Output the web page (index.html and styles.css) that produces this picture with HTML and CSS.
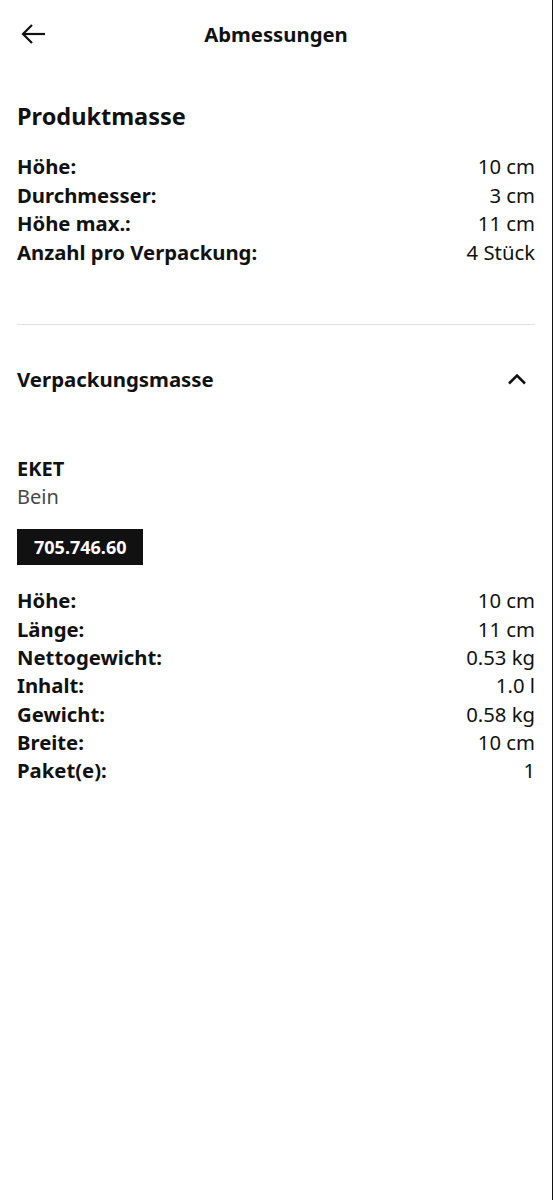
FILE: index.html
```html
<!DOCTYPE html>
<html lang="de">
<head>
    <meta charset="UTF-8">
    <meta name="viewport" content="width=device-width, initial-scale=1.0">
    <title>Abmessungen</title>
    <link rel="stylesheet" href="styles.css">
</head>
<body>
    <div class="page">
        <header class="topbar">
            <button class="back" aria-label="Zurück">
                <svg width="26" height="26" viewBox="0 0 26 26" fill="none" stroke="#111" stroke-width="2.2">
                    <path d="M25 13H3"/>
                    <path d="M12 4L3 13l9 9"/>
                </svg>
            </button>
            <h1 class="topbar-title">Abmessungen</h1>
            <span class="spacer"></span>
        </header>

        <section class="block">
            <h2 class="block-title">Produktmasse</h2>
            <dl class="specs">
                <div class="spec"><dt>Höhe:</dt><dd>10 cm</dd></div>
                <div class="spec"><dt>Durchmesser:</dt><dd>3 cm</dd></div>
                <div class="spec"><dt>Höhe max.:</dt><dd>11 cm</dd></div>
                <div class="spec"><dt>Anzahl pro Verpackung:</dt><dd>4 Stück</dd></div>
            </dl>
        </section>

        <hr class="divider">

        <section class="block">
            <div class="accordion-head">
                <h3 class="accordion-title">Verpackungsmasse</h3>
                <svg class="chevron" width="20" height="12" viewBox="0 0 20 12" fill="none" stroke="#111" stroke-width="2.6">
                    <path d="M2 10.5L10 2.5l8 8"/>
                </svg>
            </div>

            <div class="product">
                <div class="product-name">EKET</div>
                <div class="product-type">Bein</div>
                <span class="article">705.746.60</span>
            </div>

            <dl class="specs specs-package">
                <div class="spec"><dt>Höhe:</dt><dd>10 cm</dd></div>
                <div class="spec"><dt>Länge:</dt><dd>11 cm</dd></div>
                <div class="spec"><dt>Nettogewicht:</dt><dd>0.53 kg</dd></div>
                <div class="spec"><dt>Inhalt:</dt><dd>1.0 l</dd></div>
                <div class="spec"><dt>Gewicht:</dt><dd>0.58 kg</dd></div>
                <div class="spec"><dt>Breite:</dt><dd>10 cm</dd></div>
                <div class="spec"><dt>Paket(e):</dt><dd>1</dd></div>
            </dl>
        </section>
    </div>
</body>
</html>
```

FILE: styles.css
```css
body {
    margin: 0;
    font-family: "Noto Sans", Arial, sans-serif;
    color: #111;
    background: #fff;
}
.page {
    min-height: 1200px;
    box-sizing: border-box;
    border-right: 1px solid #111;
    padding: 0 17px 0 17px;
}
.topbar {
    height: 68px;
    display: flex;
    align-items: center;
    justify-content: space-between;
}
.back {
    border: 0;
    background: none;
    padding: 0;
    margin-left: 3px;
    width: 40px;
    height: 26px;
    display: flex;
    align-items: center;
}
.spacer {
    width: 43px;
}
.topbar-title {
    margin: 0;
    font-size: 20.3px;
    font-weight: 700;
}
.block-title {
    margin: 32px 0 20px;
    font-size: 23.5px;
    line-height: 32px;
    font-weight: 700;
}
.specs {
    margin: 0;
    font-size: 20.3px;
    line-height: 28.6px;
}
.specs-package {
    line-height: 28.3px;
}
.spec {
    display: flex;
    justify-content: space-between;
}
.spec dt {
    font-weight: 700;
}
.spec dd {
    margin: 0;
}
.divider {
    border: 0;
    border-top: 1px solid #dfdfdf;
    margin: 58px 0 0;
}
.accordion-head {
    display: flex;
    align-items: center;
    justify-content: space-between;
    height: 108px;
}
.accordion-title {
    margin: 0;
    font-size: 20.4px;
    font-weight: 700;
}
.chevron {
    margin-right: 8px;
}
.product {
    padding-top: 22px;
    font-size: 20px;
    line-height: 28px;
}
.product-name {
    font-weight: 700;
}
.product-type {
    color: #484848;
}
.article {
    display: inline-block;
    vertical-align: top;
    margin: 18px 0 21px;
    background: #111;
    color: #fff;
    font-size: 18px;
    font-weight: 700;
    line-height: 36px;
    padding: 0 17px;
}
```
